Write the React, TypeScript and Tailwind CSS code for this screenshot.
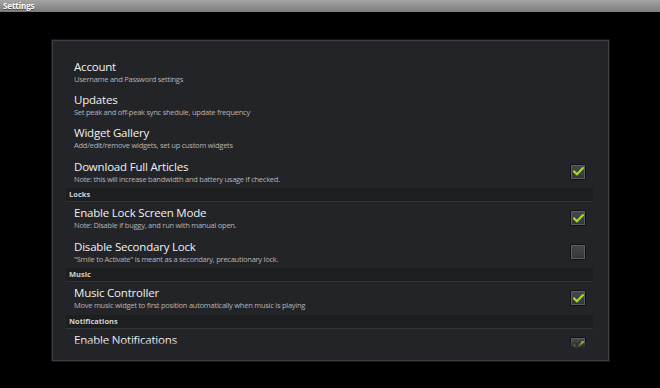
import type { FC } from "react";

type Row =
  | { kind: "item"; title: string; sub: string; check?: boolean }
  | { kind: "header"; label: string };

const rows: Row[] = [
  { kind: "item", title: "Account", sub: "Username and Password settings" },
  { kind: "item", title: "Updates", sub: "Set peak and off-peak sync shedule, update frequency" },
  { kind: "item", title: "Widget Gallery", sub: "Add/edit/remove widgets, set up custom widgets" },
  { kind: "item", title: "Download Full Articles", sub: "Note: this will increase bandwidth and battery usage if checked.", check: true },
  { kind: "header", label: "Locks" },
  { kind: "item", title: "Enable Lock Screen Mode", sub: "Note: Disable if buggy, and run with manual open.", check: true },
  { kind: "item", title: "Disable Secondary Lock", sub: "\"Smile to Activate\" is meant as a secondary, precautionary lock.", check: false },
  { kind: "header", label: "Music" },
  { kind: "item", title: "Music Controller", sub: "Move music widget to first position automatically when music is playing", check: true },
  { kind: "header", label: "Notifications" },
  { kind: "item", title: "Enable Notifications", sub: "Show notifications on the lock screen", check: true },
];

const CheckBox: FC<{ on: boolean }> = ({ on }) => (
  <div className="w-[16px] h-[16px] shrink-0 border border-[#111214] rounded-[1px] bg-[#5c5d60] p-[1px]">
    <div className="w-full h-full bg-gradient-to-b from-[#45464a] to-[#36373a] flex items-center justify-center">
      {on && (
        <svg width="11" height="9" viewBox="0 0 11 9">
          <path d="M1.2 4.6 L4 7.2 L9.8 1.2" fill="none" stroke="#9fe01c" strokeWidth="2.2" strokeLinecap="square" />
        </svg>
      )}
    </div>
  </div>
);

const App: FC = () => {
  return (
    <div
      className="w-[660px] h-[388px] bg-black flex flex-col overflow-hidden"
      style={{ fontFamily: '"Open Sans", "Noto Sans", sans-serif' }}
    >
      <div className="h-[12px] shrink-0 bg-gradient-to-b from-[#a5a5a5] to-[#7b7b7b] flex items-center px-[3px]">
        <span className="text-[8px] leading-[10px] font-bold tracking-[-0.1px] text-white [text-shadow:0_1px_0_#444]">Settings</span>
      </div>

      <div className="pl-[52px] pt-[28px]">
        <div className="w-[557px] h-[321px] bg-[#232428] border border-[#3e3f42] shadow-[0_0_0_1px_#161617] pt-[14px] pb-[12px] pl-[13px] pr-[15px]">
          <div className="relative h-full overflow-hidden">
            {rows.map((r, i) =>
              r.kind === "header" ? (
                <div
                  key={i}
                  className="h-[13.5px] flex items-end bg-[#1d1e20] border-b border-[#333437] pl-[3px] pb-[2px]"
                >
                  <span className="text-[7.5px] leading-[10px] font-bold text-[#cfcfcf]">{r.label}</span>
                </div>
              ) : (
                <div key={i} className="h-[33.3px] flex items-center pl-[8px] pr-[7px]">
                  <div className="flex-1 flex flex-col">
                    <span className="text-[11.5px] leading-[14px] tracking-[-0.2px] text-[#f0f0f0]">{r.title}</span>
                    <span className="text-[7.5px] leading-[10px] tracking-[-0.25px] text-[#b4b4b4]">{r.sub}</span>
                  </div>
                  {r.check !== undefined && <CheckBox on={r.check} />}
                </div>
              )
            )}
            <div className="absolute left-0 right-0 bottom-0 h-[7px] bg-gradient-to-b from-[#23242800] to-[#232428]" />
          </div>
        </div>
      </div>
    </div>
  );
};

export default App;
